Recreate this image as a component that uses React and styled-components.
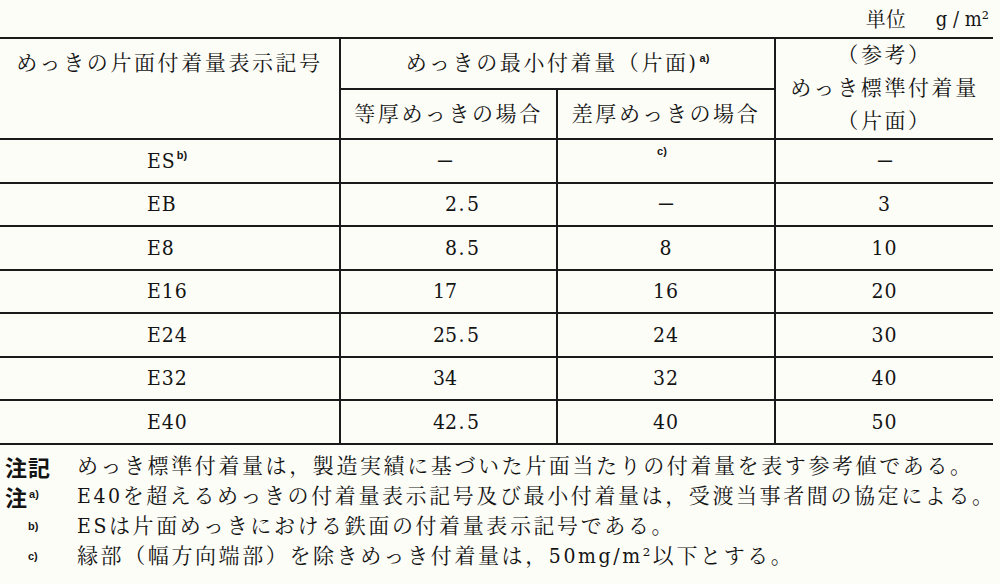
import React from 'react';
import styled, { createGlobalStyle } from 'styled-components';

const SERIF = `"DejaVu Serif Condensed", "DejaVu Serif", "Liberation Serif", "Noto Serif CJK JP", "Noto Sans CJK JP", serif`;

const GlobalStyle = createGlobalStyle`
  body {
    margin: 0;
    background: #fdfdf8;
    color: #141414;
    font-family: ${SERIF};
  }
`;

const Page = styled.div`
  width: 1000px;
`;

const UnitLine = styled.div`
  height: 37px;
  width: 993px;
  display: flex;
  justify-content: flex-end;
  align-items: center;
  gap: 30px;
  padding-right: 4px;
  box-sizing: border-box;
  font-size: 20px;
`;

const Table = styled.table`
  width: 993px;
  border-collapse: collapse;
  table-layout: fixed;
`;

const HeadRow = styled.tr`
  height: ${(p) => p.$h}px;
`;

const DataRow = styled.tr`
  height: 43.5px;
`;

const cellBorder = (p) => `
  border-top: 2px solid #1a1a1a;
  border-bottom: 2px solid #1a1a1a;
  border-left: ${p.$first ? 'none' : '2px solid #1a1a1a'};
  border-right: ${p.$last ? 'none' : '2px solid #1a1a1a'};
`;

const HeadCell = styled.th`
  ${cellBorder}
  font-family: ${SERIF};
  font-weight: normal;
  font-size: 21px;
  letter-spacing: 2.6px;
  line-height: 33px;
  text-align: center;
  vertical-align: ${(p) => (p.$top ? 'top' : 'middle')};
  padding: ${(p) => (p.$top ? '8px 0 0' : '0')};
`;

const Cell = styled.td`
  ${cellBorder}
  font-family: ${SERIF};
  font-size: 21px;
  letter-spacing: 1px;
  padding: 0 0 0 ${(p) => p.$pad || 0}px;
  text-align: ${(p) => (p.$pad ? 'left' : 'center')};
  vertical-align: ${(p) => (p.$top ? 'top' : 'middle')};
`;

const Sup = styled.span`
  font-family: "Liberation Sans", Arial, sans-serif;
  font-size: 11px;
  font-weight: bold;
  letter-spacing: 0;
  line-height: 1;
  vertical-align: baseline;
  position: relative;
  top: ${(p) => -(p.$raise || 0)}px;
  margin-left: 1px;
`;

const TopMark = styled.div`
  font-family: "Liberation Sans", Arial, sans-serif;
  font-size: 11px;
  font-weight: bold;
  letter-spacing: 0;
  padding-top: 5px;
  padding-right: 8px;
`;

const IntPart = styled.span`
  display: inline-block;
  width: 25px;
  text-align: ${(p) => (p.$dash ? 'center' : 'right')};
  letter-spacing: 0;
`;

const Dot = styled.span`
  display: inline-block;
  width: 10px;
  text-align: center;
`;

const DashMark = styled.span`
  display: inline-block;
  letter-spacing: 0;
  transform: scaleX(1.2);
`;

const NoteList = styled.div`
  padding: 6px 0 0 5px;
  font-size: 21px;
  letter-spacing: 2.6px;
  line-height: 30px;
`;

const NoteRow = styled.div`
  display: grid;
  grid-template-columns: 72px 1fr;
  white-space: nowrap;
`;

const NoteLabel = styled.span`
  font-family: "Noto Sans CJK JP", sans-serif;
  font-weight: bold;
  font-size: 22px;
  letter-spacing: 1px;
  padding-left: ${(p) => p.$indent || 0}px;
`;

const Dash = () => <DashMark>−</DashMark>;

const Amount = ({ v }) => {
  if (v === '-') return <IntPart $dash><Dash /></IntPart>;
  const [i, f] = v.split('.');
  return (
    <>
      <IntPart>{i}</IntPart>
      {f && (
        <>
          <Dot>.</Dot>
          {f}
        </>
      )}
    </>
  );
};

const rows = [
  { sym: 'ES', note: 'b)', even: '-', diff: 'c)', std: '-' },
  { sym: 'EB', even: '2.5', diff: '-', std: '3' },
  { sym: 'E8', even: '8.5', diff: '8', std: '10' },
  { sym: 'E16', even: '17', diff: '16', std: '20' },
  { sym: 'E24', even: '25.5', diff: '24', std: '30' },
  { sym: 'E32', even: '34', diff: '32', std: '40' },
  { sym: 'E40', even: '42.5', diff: '40', std: '50' },
];

const App = () => (
  <Page>
    <GlobalStyle />
    <UnitLine>
      <span>単位</span>
      <span>g / m²</span>
    </UnitLine>
    <Table>
      <colgroup>
        <col style={{ width: 340 }} />
        <col style={{ width: 217 }} />
        <col style={{ width: 218 }} />
        <col style={{ width: 218 }} />
      </colgroup>
      <thead>
        <HeadRow $h={51}>
          <HeadCell $first $top rowSpan={2}>
            めっきの片面付着量表示記号
          </HeadCell>
          <HeadCell colSpan={2}>
            めっきの最小付着量（片面)<Sup $raise={8}>a)</Sup>
          </HeadCell>
          <HeadCell $last rowSpan={2}>
            （参考）
            <br />
            めっき標準付着量
            <br />
            （片面）
          </HeadCell>
        </HeadRow>
        <HeadRow $h={50}>
          <HeadCell>等厚めっきの場合</HeadCell>
          <HeadCell>差厚めっきの場合</HeadCell>
        </HeadRow>
      </thead>
      <tbody>
        {rows.map((r) => (
          <DataRow key={r.sym}>
            <Cell $first $pad={147}>
              {r.sym}
              {r.note && <Sup $raise={9}>{r.note}</Sup>}
            </Cell>
            <Cell $pad={91}>
              <Amount v={r.even} />
            </Cell>
            {r.diff === 'c)' ? (
              <Cell $top>
                <TopMark>c)</TopMark>
              </Cell>
            ) : (
              <Cell>{r.diff === '-' ? <Dash /> : r.diff}</Cell>
            )}
            <Cell $last>{r.std === '-' ? <Dash /> : r.std}</Cell>
          </DataRow>
        ))}
      </tbody>
    </Table>
    <NoteList>
      <NoteRow>
        <NoteLabel>注記</NoteLabel>
        <span>めっき標準付着量は，製造実績に基づいた片面当たりの付着量を表す参考値である。</span>
      </NoteRow>
      <NoteRow>
        <NoteLabel>
          注<Sup $raise={8}>a)</Sup>
        </NoteLabel>
        <span>E40を超えるめっきの付着量表示記号及び最小付着量は，受渡当事者間の協定による。</span>
      </NoteRow>
      <NoteRow>
        <NoteLabel $indent={22}>
          <Sup $raise={6}>b)</Sup>
        </NoteLabel>
        <span>ESは片面めっきにおける鉄面の付着量表示記号である。</span>
      </NoteRow>
      <NoteRow>
        <NoteLabel $indent={22}>
          <Sup $raise={6}>c)</Sup>
        </NoteLabel>
        <span>縁部（幅方向端部）を除きめっき付着量は，50mg/m²以下とする。</span>
      </NoteRow>
    </NoteList>
  </Page>
);

export default App;
